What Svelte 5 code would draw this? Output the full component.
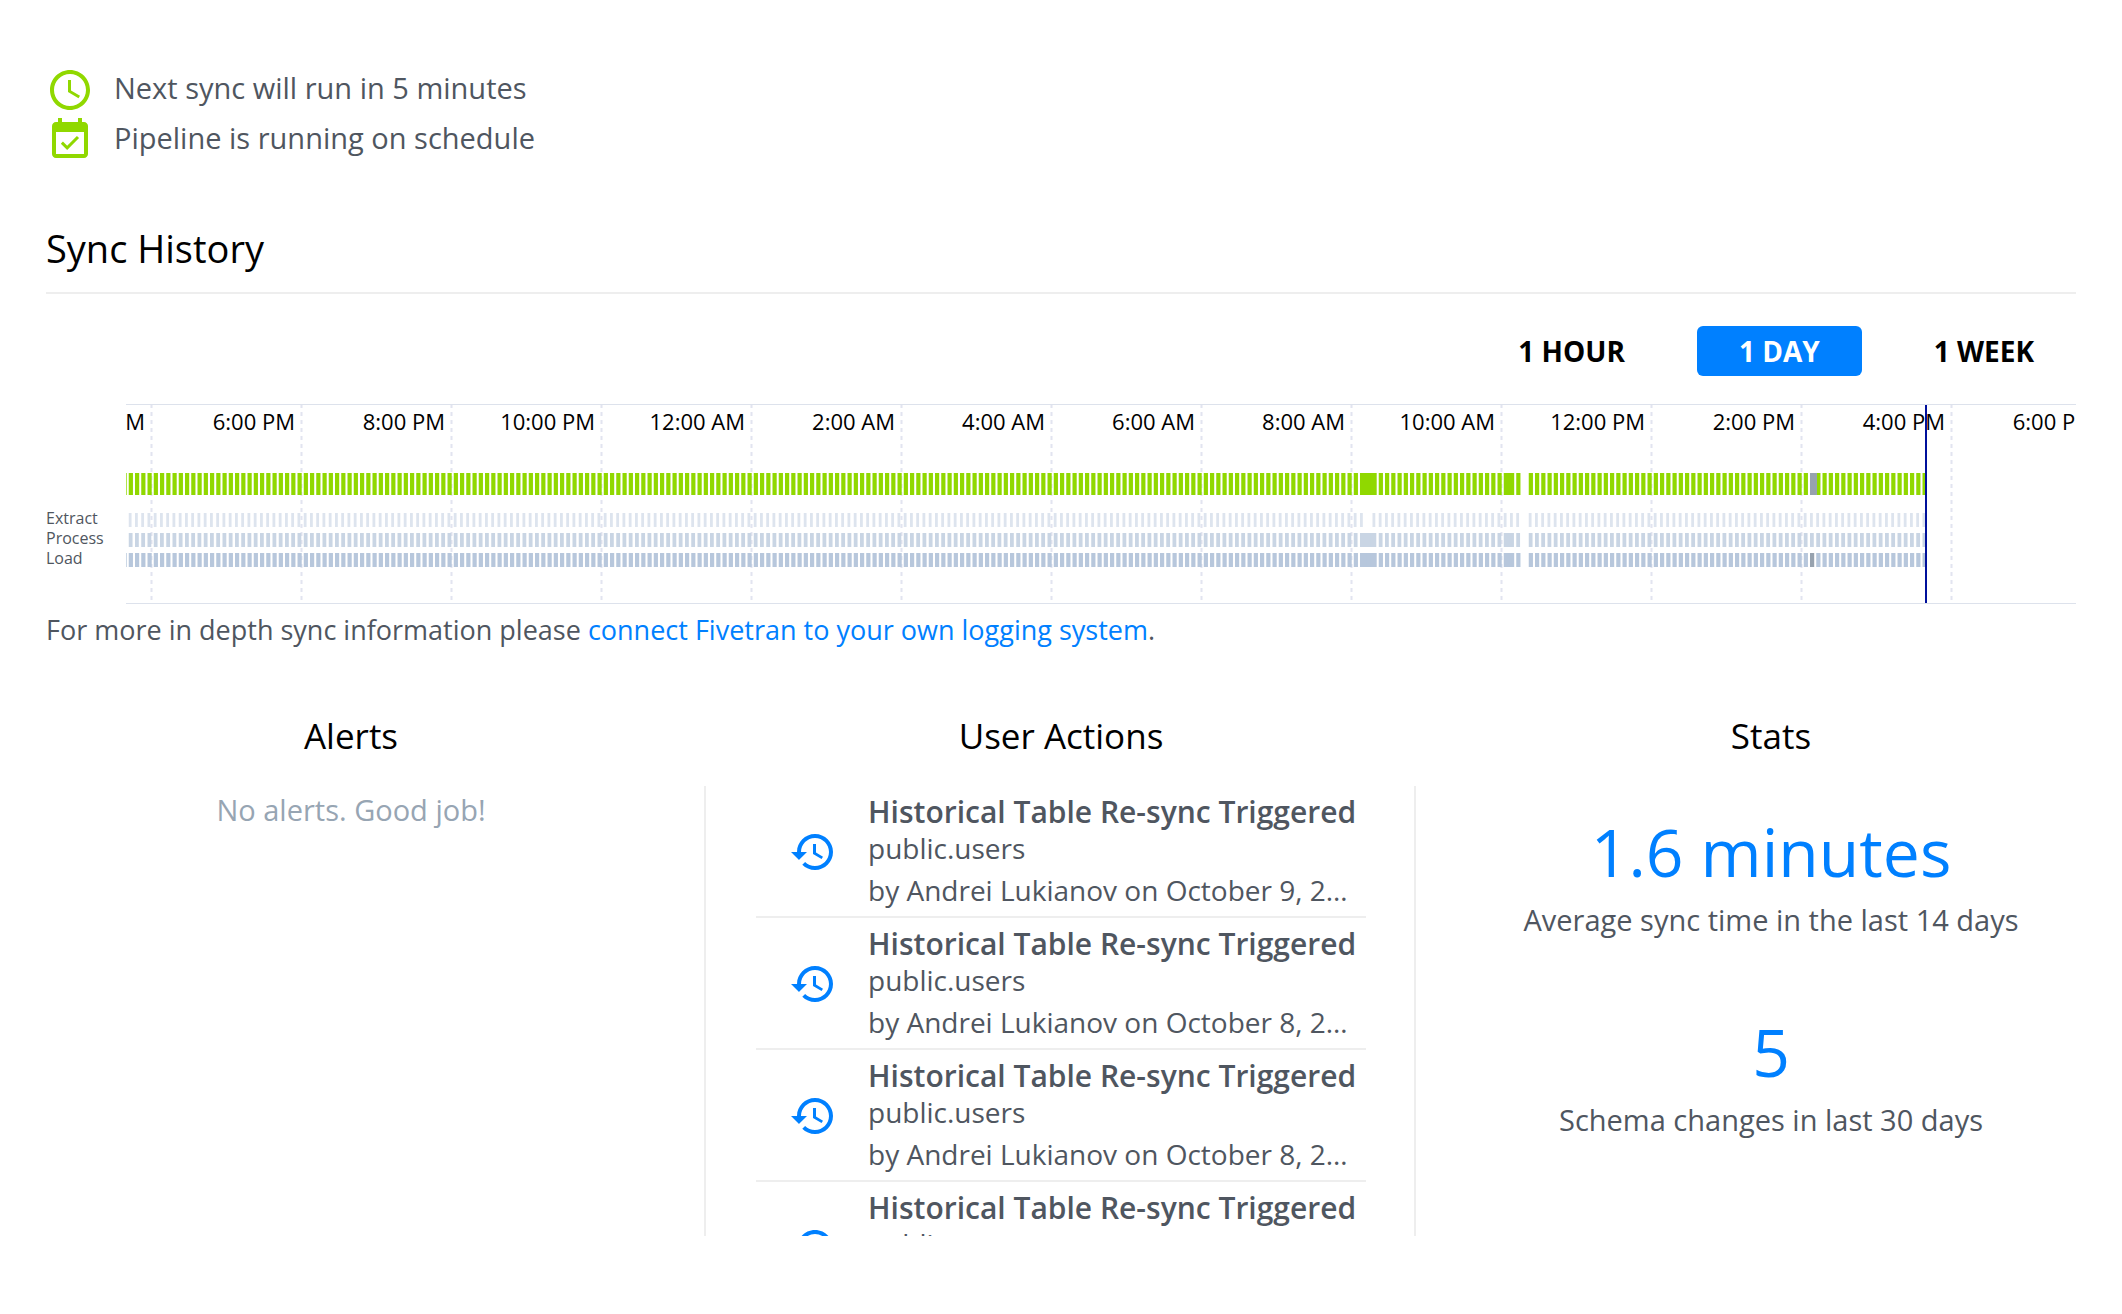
<script>
  const ranges = ['1 Hour', '1 Day', '1 Week'];
  let range = $state('1 Day');

  const TICK_GAP = 150;
  const STEP = 6.25;
  const FIRST = 2.75;
  const NOW = 1800;

  const ticks = [
    '4:00 PM', '6:00 PM', '8:00 PM', '10:00 PM', '12:00 AM', '2:00 AM', '4:00 AM',
    '6:00 AM', '8:00 AM', '10:00 AM', '12:00 PM', '2:00 PM', '4:00 PM', '6:00 PM',
  ].map((label, i) => ({ label, x: 25 + i * TICK_GAP }));

  // Syncs that ran longer than one slot, keyed by slot
  const longRuns = { 197: 16, 220: 10 };
  const missed = [223];
  const rescheduled = 269;

  const syncs = Array.from({ length: 289 }, (_, i) => i - 1)
    .filter((n) => !missed.includes(n))
    .map((n) => ({ n, x: FIRST + n * STEP, long: longRuns[n] ?? 0 }));

  const lanes = [
    { name: 'total', y: 68, height: 22, width: 4.2 },
    { name: 'extract', y: 108, height: 14, width: 2.8 },
    { name: 'process', y: 128, height: 14, width: 3.8 },
    { name: 'load', y: 148, height: 14, width: 4.2 },
  ];

  // Delayed bars go last so that they sit over their neighbours
  function bars(lane) {
    return syncs
      .filter((s) => !(lane.name === 'extract' && s.n === 198))
      .filter((s) => s.n >= 0 || lane.name === 'total' || lane.name === 'load')
      .map((s) => {
        const delayed = s.n === rescheduled && (lane.name === 'total' || lane.name === 'load');
        let width = lane.width;
        if (s.long && lane.name !== 'extract') width = s.long;
        if (delayed && lane.name === 'total') width = 7;
        return { x: s.x, width: Math.min(width, NOW - s.x), delayed };
      })
      .sort((a, b) => a.delayed - b.delayed);
  }

  const actions = [
    { table: 'public.users', by: 'Andrei Lukianov', date: 'October 9, 2019' },
    { table: 'public.users', by: 'Andrei Lukianov', date: 'October 8, 2019' },
    { table: 'public.users', by: 'Andrei Lukianov', date: 'October 8, 2019' },
    { table: 'public.users', by: 'Andrei Lukianov', date: 'October 8, 2019' },
  ];

  const stats = [
    { value: '1.6 minutes', label: 'Average sync time in the last 14 days' },
    { value: '5', label: 'Schema changes in last 30 days' },
  ];
</script>

<main class="page">
  <ul class="status">
    <li>
      <svg class="icon" viewBox="0 0 24 24" aria-hidden="true">
        <path d="M11.99 2C6.47 2 2 6.48 2 12s4.47 10 9.99 10C17.52 22 22 17.52 22 12S17.52 2 11.99 2zM12 20c-4.42 0-8-3.58-8-8s3.58-8 8-8 8 3.58 8 8-3.58 8-8 8z" />
        <path d="M12.5 7H11v6l5.25 3.15.75-1.23-4.5-2.67z" />
      </svg>
      <span>Next sync will run in 5 minutes</span>
    </li>
    <li>
      <svg class="icon" viewBox="0 0 24 24" aria-hidden="true">
        <path d="M16.53 11.06L15.47 10l-4.88 4.88-2.12-2.12-1.06 1.06L10.59 17l5.94-5.94zM19 3h-1V1h-2v2H8V1H6v2H5c-1.11 0-1.99.9-1.99 2L3 19c0 1.1.89 2 2 2h14c1.1 0 2-.9 2-2V5c0-1.1-.9-2-2-2zm0 16H5V8h14v11z" />
      </svg>
      <span>Pipeline is running on schedule</span>
    </li>
  </ul>

  <section class="history">
    <h1>Sync History</h1>

    <div class="ranges">
      {#each ranges as r}
        <button class="range" class:active={range === r} onclick={() => (range = r)}>{r}</button>
      {/each}
    </div>

    <div class="timeline">
      <div class="lane-labels">
        <span>Extract</span>
        <span>Process</span>
        <span>Load</span>
      </div>
      <svg class="chart" role="img" aria-label="Sync history">
        {#each ticks as tick}
          <line class="grid" x1={tick.x + 0.5} x2={tick.x + 0.5} y1="-1" y2="198" />
          <text class="tick" x={tick.x - 6} y="25">{tick.label}</text>
        {/each}
        {#each lanes as lane}
          <g class={lane.name}>
            {#each bars(lane) as bar}
              <rect class:delayed={bar.delayed} x={bar.x} y={lane.y} width={bar.width} height={lane.height} />
            {/each}
          </g>
        {/each}
        <rect class="now" x={NOW - 1} y="-1" width="2" height="200" />
      </svg>
    </div>

    <p class="note">
      For more in depth sync information please <a href="#logging">connect Fivetran to your own logging system</a>.
    </p>
  </section>

  <div class="panels">
    <section class="panel">
      <h2>Alerts</h2>
      <div class="panel-body">
        <p class="empty">No alerts. Good job!</p>
      </div>
    </section>

    <section class="panel">
      <h2>User Actions</h2>
      <div class="panel-body divided">
        <ul class="actions">
          {#each actions as action}
            <li>
              <svg class="icon" viewBox="0 0 24 24" aria-hidden="true">
                <path d="M13 3c-4.97 0-9 4.03-9 9H1l3.89 3.89.07.14L9 12H6c0-3.87 3.13-7 7-7s7 3.13 7 7-3.13 7-7 7c-1.93 0-3.68-.79-4.94-2.06l-1.42 1.42C8.27 19.99 10.51 21 13 21c4.97 0 9-4.03 9-9s-4.03-9-9-9zm-1 5v5l4.28 2.54.72-1.21-3.5-2.08V8H12z" />
              </svg>
              <div class="action-text">
                <h3>Historical Table Re-sync Triggered</h3>
                <p class="table-name">{action.table}</p>
                <p class="byline">by {action.by} on {action.date}</p>
              </div>
            </li>
          {/each}
        </ul>
      </div>
    </section>

    <section class="panel">
      <h2>Stats</h2>
      <div class="panel-body">
        {#each stats as stat}
          <div class="stat">
            <strong>{stat.value}</strong>
            <span>{stat.label}</span>
          </div>
        {/each}
      </div>
    </section>
  </div>
</main>

<style>
  :global(body) { background: #fff; }

  .page {
    padding: 66px 46px 78px;
    font-family: 'Open Sans', sans-serif;
    font-size: 29px;
    line-height: 36px;
    color: #4f5660;
  }
  h1, h2, h3, p, ul {
    margin: 0;
    padding: 0;
    font-weight: 400;
  }
  ul { list-style: none; }

  .icon {
    width: 48px;
    height: 48px;
    flex: none;
    fill: currentColor;
  }

  .status li {
    display: flex;
    align-items: flex-start;
    gap: 20px;
    height: 50px;
  }
  .status .icon { color: #90d800; }
  .status span { line-height: 44px; }

  h1 {
    margin-top: 58px;
    padding-bottom: 20px;
    border-bottom: 2px solid #eee;
    font-size: 38px;
    line-height: 48px;
    color: #000;
  }

  .ranges {
    display: flex;
    justify-content: flex-end;
    gap: 30px;
    margin: 32px 0 28px;
  }
  .range {
    padding: 1px 42px 0;
    border: none;
    border-radius: 6px;
    background: none;
    font: 700 28px/49px 'Open Sans', sans-serif;
    text-transform: uppercase;
    color: #000;
    cursor: pointer;
  }
  .range.active {
    background: #0080ff;
    color: #fff;
  }

  .timeline { display: flex; }
  .lane-labels {
    display: flex;
    flex-direction: column;
    width: 80px;
    flex: none;
    padding-top: 104px;
    font-size: 16px;
    line-height: 20px;
  }
  .chart {
    flex: 1;
    min-width: 0;
    height: 198px;
    border-top: 1px solid #dde2ec;
    border-bottom: 1px solid #dde2ec;
    overflow: hidden;
  }
  .grid {
    stroke: #e2e4f0;
    stroke-width: 2;
    stroke-dasharray: 4 4;
  }
  .tick {
    font-size: 22px;
    fill: #000;
    text-anchor: end;
  }
  .total { fill: #90d800; }
  .extract { fill: #dde4ee; }
  .process { fill: #c9d5e4; }
  .load { fill: #b7c7dc; }
  .delayed { fill: #97a2ae; }
  .now { fill: #00109b; }

  .note {
    margin-top: 8px;
    font-size: 27px;
  }
  a {
    color: #0080ff;
    text-decoration: none;
  }

  .panels {
    display: grid;
    grid-template-columns: repeat(3, minmax(0, 1fr));
    gap: 100px;
    margin-top: 66px;
  }
  h2 {
    margin-bottom: 28px;
    font-size: 35px;
    line-height: 44px;
    color: #000;
    text-align: center;
  }
  .panel-body {
    height: 450px;
    overflow: hidden;
  }
  .panel-body.divided {
    margin: 0 -50px 0 -52px;
    padding: 0 48px 0 50px;
    border-left: 2px solid #eee;
    border-right: 2px solid #eee;
  }
  .empty {
    padding-top: 6px;
    text-align: center;
    color: #97a5b3;
  }

  .actions li {
    display: flex;
    align-items: center;
    gap: 31px;
    height: 130px;
    padding-left: 33px;
    border-bottom: 2px solid #eee;
    font-size: 28px;
  }
  .actions .icon {
    margin-top: 2px;
    color: #0080ff;
  }
  .action-text { min-width: 0; }
  h3 {
    font-size: 30px;
    font-weight: 600;
    white-space: nowrap;
  }
  .byline {
    margin: 6px 8px 0 0;
    overflow: hidden;
    white-space: nowrap;
    text-overflow: ellipsis;
  }

  .stat {
    display: flex;
    flex-direction: column;
    align-items: center;
    height: 200px;
  }
  .stat strong {
    margin-top: 26px;
    font-size: 66px;
    font-weight: 400;
    line-height: 78px;
    color: #0080ff;
  }
  .stat span { margin-top: 12px; }
</style>
